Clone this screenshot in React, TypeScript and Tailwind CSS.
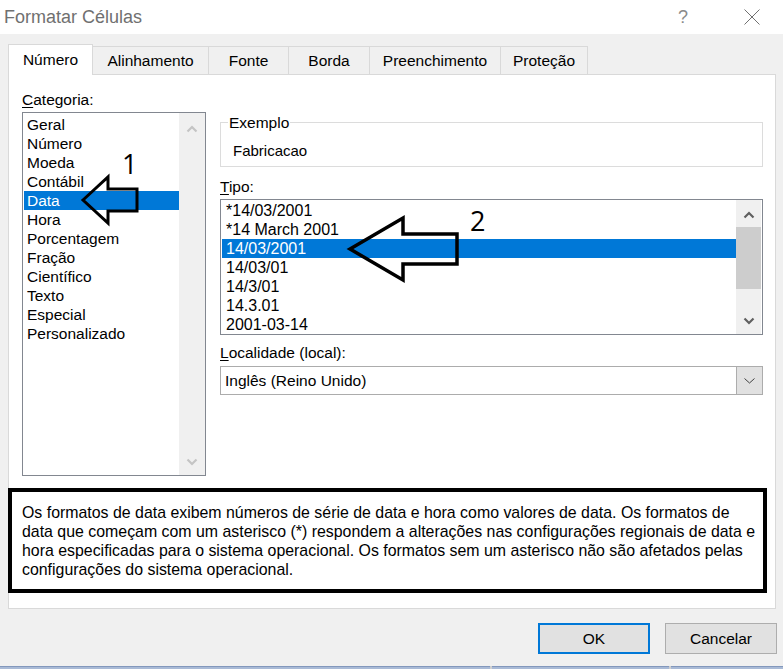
import React from "react";

const cats = ["Geral", "Número", "Moeda", "Contábil", "Data", "Hora", "Porcentagem", "Fração", "Científico", "Texto", "Especial", "Personalizado"];
const tipos = ["*14/03/2001", "*14 March 2001", "14/03/2001", "14/03/01", "14/3/01", "14.3.01", "2001-03-14"];
const tabs: { label: string; w: string }[] = [
  { label: "Número", w: "w-[85px]" },
  { label: "Alinhamento", w: "w-[116px]" },
  { label: "Fonte", w: "w-[80px]" },
  { label: "Borda", w: "w-[81px]" },
  { label: "Preenchimento", w: "w-[131px]" },
  { label: "Proteção", w: "w-[87px]" },
];

function Chevron({ up, color }: { up?: boolean; color: string }) {
  return (
    <svg width="12" height="8" viewBox="0 0 12 8">
      <polyline
        points={up ? "1.5,6.5 6,2 10.5,6.5" : "1.5,1.5 6,6 10.5,1.5"}
        fill="none"
        stroke={color}
        strokeWidth="2.2"
      />
    </svg>
  );
}

export default function App() {
  return (
    <div className="relative w-[783px] h-[669px] overflow-hidden bg-[#f0f0f0] font-['Liberation_Sans',Arial,sans-serif] text-black flex flex-col">
      {/* Title bar */}
      <div className="h-[34px] bg-white flex items-center shrink-0">
        <span className="pl-[4px] text-[18px] text-[#707070]">Formatar Células</span>
        <div className="ml-auto flex items-center pr-[23px]">
          <span className="w-[16px] text-center text-[18px] text-[#8a8a8a] leading-none">?</span>
          <svg className="ml-[53px]" width="16" height="16" viewBox="0 0 16 16">
            <line x1="0.5" y1="0.5" x2="15.5" y2="15.5" stroke="#707070" strokeWidth="1" />
            <line x1="15.5" y1="0.5" x2="0.5" y2="15.5" stroke="#707070" strokeWidth="1" />
          </svg>
        </div>
      </div>

      {/* Tabs */}
      <div className="mt-[10px] h-[30px] flex items-end pl-[8px] shrink-0">
        {tabs.map((t, i) =>
          i === 0 ? (
            <div
              key={t.label}
              className={`${t.w} h-[31px] -mb-px relative z-10 bg-white border border-b-0 border-[#d9d9d9] flex items-center justify-center text-[15.5px]`}
            >
              {t.label}
            </div>
          ) : (
            <div
              key={t.label}
              className={`${t.w} h-[28px] border border-b-0 border-l-0 border-[#d9d9d9] flex items-center justify-center text-[15.5px]`}
            >
              {t.label}
            </div>
          )
        )}
      </div>

      {/* Panel */}
      <div className="ml-[8px] w-[768px] h-[535px] shrink-0 border border-[#d9d9d9] bg-white flex flex-col pt-[15px]">
        <div className="flex pl-[13px] gap-[14px]">
          {/* Left column */}
          <div className="w-[184px] flex flex-col">
            <div className="h-[19px] leading-[19px] text-[15.5px]">
              <span className="underline underline-offset-2">C</span>ategoria:
            </div>
            <div className="mt-[3px] h-[364px] border border-[#828790] flex">
              <div className="flex-1 pt-[2px] pl-[1px]">
                {cats.map((c) => (
                  <div
                    key={c}
                    className={`h-[19px] leading-[19px] pl-[3px] text-[15.5px] ${c === "Data" ? "bg-[#0078d7] text-white" : ""}`}
                  >
                    {c}
                  </div>
                ))}
              </div>
              <div className="w-[26px] bg-[#f0f0f0] flex flex-col">
                <div className="h-[27px] pt-[5px] flex items-center justify-center">
                  <Chevron up color="#c4c4c4" />
                </div>
                <div className="flex-1" />
                <div className="h-[27px] flex items-center justify-center">
                  <Chevron color="#c4c4c4" />
                </div>
              </div>
            </div>
          </div>

          {/* Right column */}
          <div className="w-[543px] flex flex-col">
            <div className="mt-[32px] relative h-[45px] border border-[#dcdcdc]">
              <div className="absolute left-[7px] top-[-10px] bg-white px-[1px] leading-[19px] text-[15.5px]">Exemplo</div>
              <div className="pl-[12px] pt-[18px] leading-[19px] text-[15px]">Fabricacao</div>
            </div>
            <div className="mt-[10px] h-[19px] leading-[19px] text-[15.5px]">
              <span className="underline underline-offset-2">T</span>ipo:
            </div>
            <div className="mt-[3px] h-[136px] border border-[#828790] flex">
              <div className="flex-1 pt-[1px] pl-[1px]">
                {tipos.map((t, i) => (
                  <div
                    key={t}
                    className={`h-[19px] leading-[19px] pl-[4px] text-[16px] ${i === 2 ? "bg-[#0078d7] text-white" : ""}`}
                  >
                    {t}
                  </div>
                ))}
              </div>
              <div className="w-[25px] mr-px bg-[#f0f0f0] flex flex-col">
                <div className="h-[27px] pt-[3px] flex items-center justify-center">
                  <Chevron up color="#606060" />
                </div>
                <div className="h-[62px] bg-[#cdcdcd]" />
                <div className="flex-1" />
                <div className="h-[27px] flex items-center justify-center">
                  <Chevron color="#606060" />
                </div>
              </div>
            </div>
            <div className="mt-[8px] h-[19px] leading-[19px] text-[15.5px]">
              <span className="underline underline-offset-2">L</span>ocalidade (local):
            </div>
            <div className="mt-[4px] h-[29px] border border-[#acacac] flex">
              <div className="flex-1 pl-[4px] leading-[27px] text-[15.5px]">Inglês (Reino Unido)</div>
              <div className="w-[26px] bg-[#e1e1e1] border-l border-[#adadad] flex items-center justify-center">
                <svg width="11" height="6" viewBox="0 0 11 6">
                  <polyline points="0.5,0.5 5.5,5 10.5,0.5" fill="none" stroke="#404040" strokeWidth="1" />
                </svg>
              </div>
            </div>
          </div>
        </div>

        {/* Annotated description box */}
        <div className="mt-[12px] -ml-px w-[759px] h-[105px] border-4 border-black pl-[10px] pt-[11px] text-[15.9px] leading-[19px] whitespace-nowrap">
          <div>Os formatos de data exibem números de série de data e hora como valores de data. Os formatos de</div>
          <div>data que começam com um asterisco (*) respondem a alterações nas configurações regionais de data e</div>
          <div>hora especificadas para o sistema operacional. Os formatos sem um asterisco não são afetados pelas</div>
          <div>configurações do sistema operacional.</div>
        </div>
      </div>

      {/* Buttons */}
      <div className="mt-[14px] flex justify-end gap-[15px] pr-[6px] shrink-0">
        <button className="w-[112px] h-[31px] border-2 border-[#0078d7] bg-[#e1e1e1] text-[15.5px]">OK</button>
        <button className="w-[112px] h-[31px] border border-[#adadad] bg-[#e1e1e1] text-[15.5px]">Cancelar</button>
      </div>

      {/* Bottom strip */}
      <div className="mt-auto h-[3px] flex shrink-0">
        <div className="w-[490px] bg-[#a9bad6] border-t border-[#8398bc]" />
        <div className="w-[2px] bg-[#d0d0d0]" />
        <div className="w-[177px] bg-[#a9bad6] border-t border-[#8398bc]" />
        <div className="w-[2px] bg-[#d0d0d0]" />
        <div className="flex-1 bg-[#a9bad6] border-t border-[#8398bc]" />
      </div>

      {/* Annotation arrows */}
      <svg className="absolute inset-0 pointer-events-none" width="783" height="669" viewBox="0 0 783 669">
        <polygon
          points="83,200 108,177 108,189 137,189 137,211 108,211 108,223"
          fill="none"
          stroke="#000"
          strokeWidth="3"
          strokeLinejoin="miter"
        />
        <polygon
          points="350,249 403,218 403,234 457,234 457,264 403,264 403,280"
          fill="none"
          stroke="#000"
          strokeWidth="3.5"
          strokeLinejoin="miter"
        />
      </svg>
      <div className="absolute left-[122px] top-[150px] text-[27px] leading-none font-['Open_Sans',sans-serif]">1</div>
      <div className="absolute left-[470px] top-[207px] text-[27px] leading-none font-['Open_Sans',sans-serif]">2</div>
    </div>
  );
}
